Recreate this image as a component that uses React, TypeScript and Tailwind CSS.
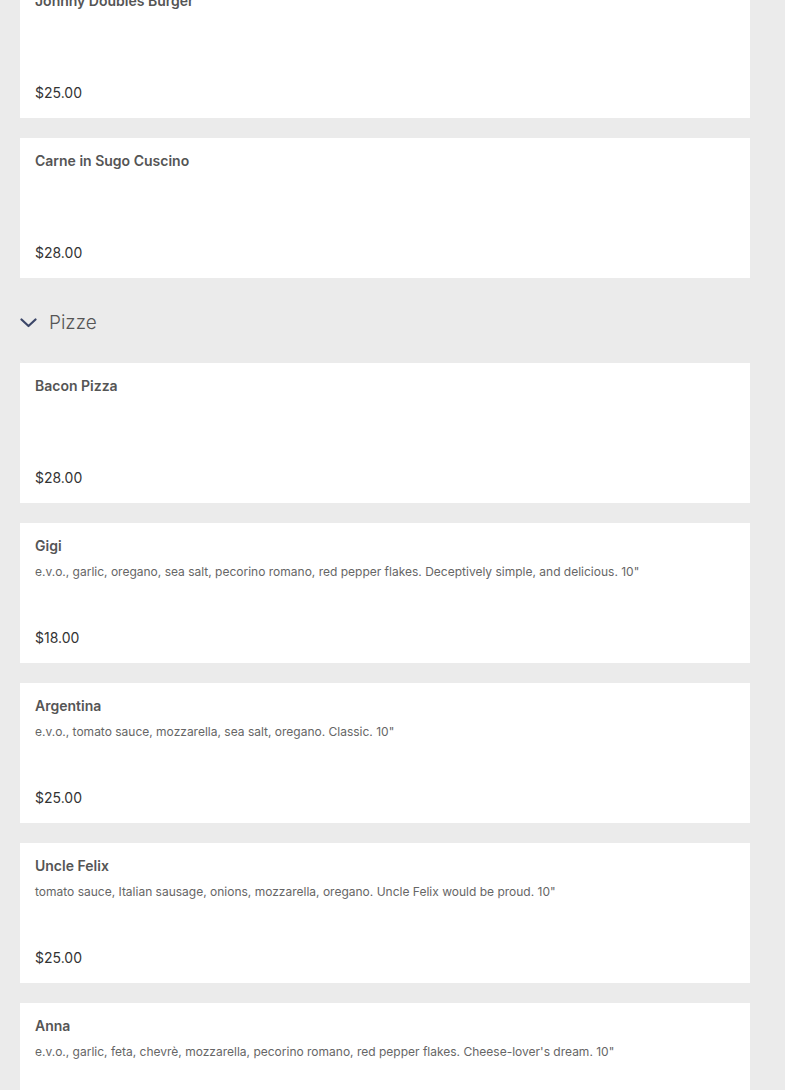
const pizze = [
  { name: 'Bacon Pizza', desc: '', price: '$28.00' },
  {
    name: 'Gigi',
    desc: 'e.v.o., garlic, oregano, sea salt, pecorino romano, red pepper flakes. Deceptively simple, and delicious. 10"',
    price: '$18.00',
  },
  { name: 'Argentina', desc: 'e.v.o., tomato sauce, mozzarella, sea salt, oregano. Classic. 10"', price: '$25.00' },
  {
    name: 'Uncle Felix',
    desc: 'tomato sauce, Italian sausage, onions, mozzarella, oregano. Uncle Felix would be proud. 10"',
    price: '$25.00',
  },
  {
    name: 'Anna',
    desc: "e.v.o., garlic, feta, chevrè, mozzarella, pecorino romano, red pepper flakes. Cheese-lover's dream. 10\"",
    price: '$25.00',
  },
];

const above = [
  { name: 'Johnny Doubles Burger', desc: '', price: '$25.00' },
  { name: 'Carne in Sugo Cuscino', desc: '', price: '$28.00' },
];

type Item = { name: string; desc: string; price: string };

function ItemCard({ item }: { item: Item }) {
  return (
    <div className="flex h-[140px] w-[730px] flex-col bg-white px-[15px] pt-[15px] pb-[15px]">
      <div className="text-[14px] leading-4 font-semibold text-[#555555]">{item.name}</div>
      {item.desc && <div className="mt-[10px] text-[12px] leading-4 text-[#666666]">{item.desc}</div>}
      <div className="mt-auto text-[14px] leading-5 text-[#333333]">{item.price}</div>
    </div>
  );
}

export default function App() {
  return (
    <div className="min-h-[1090px] w-[785px] overflow-hidden bg-[#ebebeb] pl-5" style={{ fontFamily: 'Inter, "Liberation Sans", sans-serif' }}>
      <div className="-mt-[22px] flex flex-col gap-5">
        {above.map((it) => (
          <ItemCard key={it.name} item={it} />
        ))}
      </div>

      <div className="flex h-[85px] items-center gap-3 pt-[5px]">
        <svg width="17" height="10" viewBox="0 0 17 10" fill="none">
          <path d="M1.5 1.5 L8.5 8 L15.5 1.5" stroke="#3b4668" strokeWidth="2.2" strokeLinecap="round" strokeLinejoin="round" />
        </svg>
        <span className="text-[19px] font-light text-[#555555]">Pizze</span>
      </div>

      <div className="flex flex-col gap-5">
        {pizze.map((it) => (
          <ItemCard key={it.name} item={it} />
        ))}
      </div>
    </div>
  );
}
